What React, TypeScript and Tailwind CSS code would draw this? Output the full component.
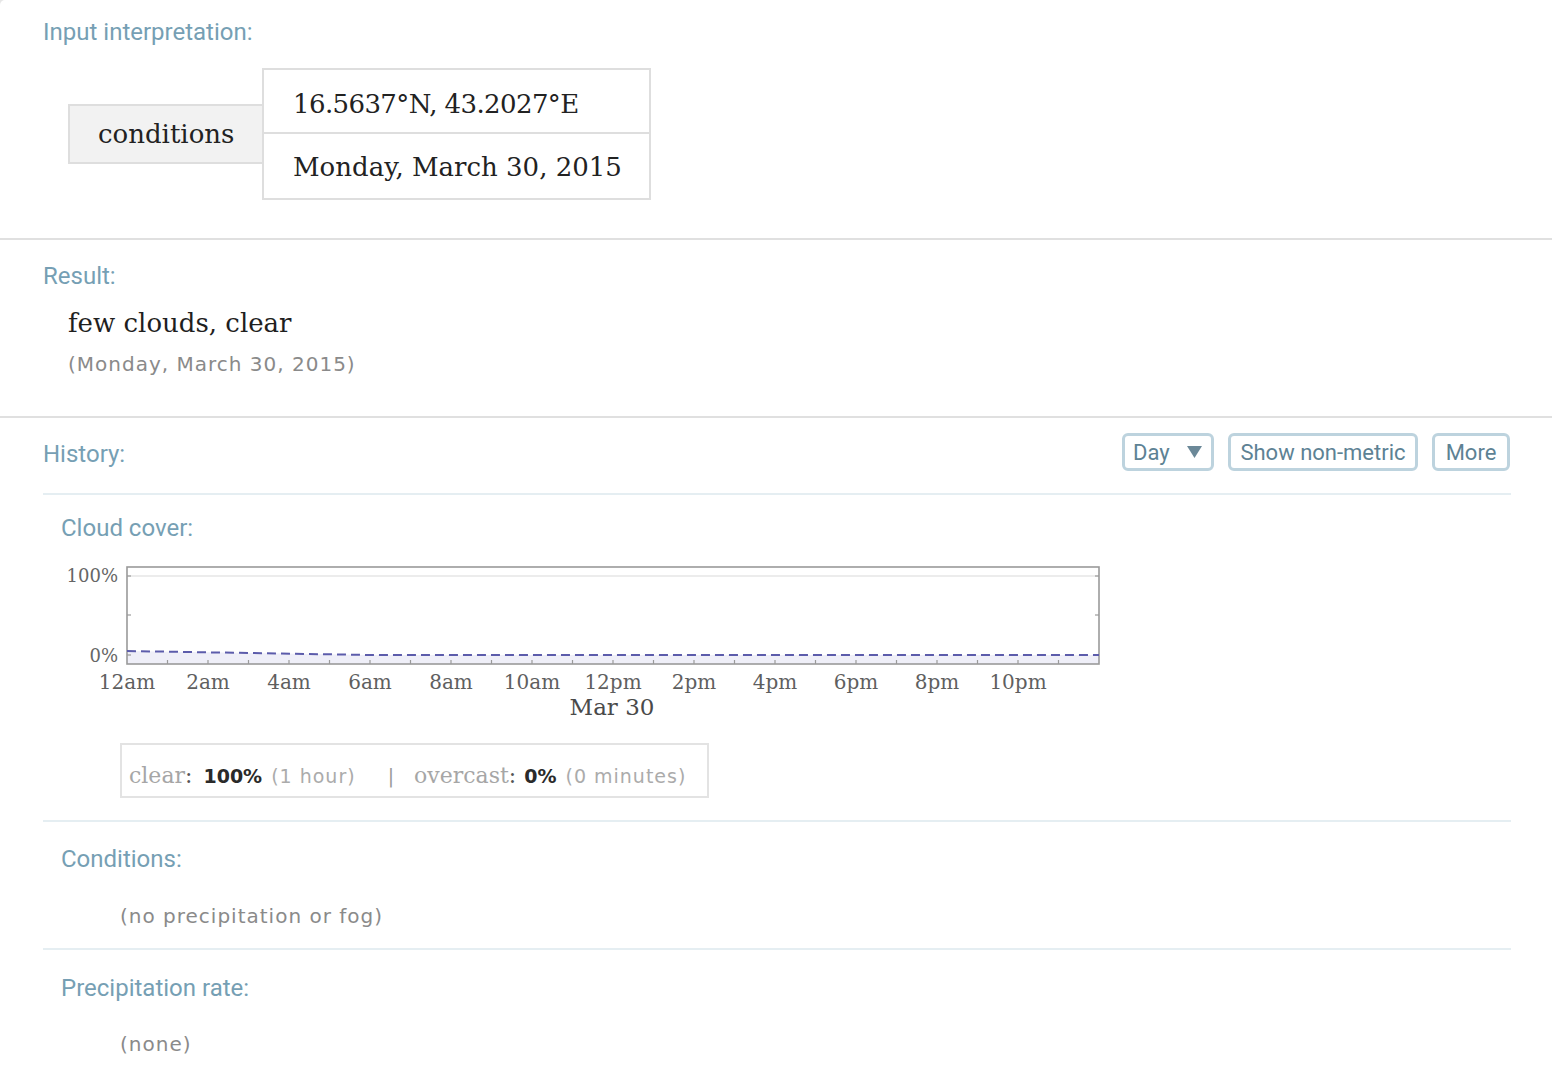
import React from "react";

const H = "font-[family-name:Roboto,sans-serif] text-[24px] leading-[28px] text-[#769fb4]";
const SERIF = "font-[family-name:'DejaVu_Serif',serif]";
const SANS = "font-[family-name:'DejaVu_Sans',sans-serif]";
const GRAYTXT = "font-[family-name:'DejaVu_Sans',sans-serif] text-[20px] leading-[26px] tracking-[1px] text-[#8a8a8a]";
const BTN = "h-[38px] border-[3px] border-[#bdd3de] rounded-[6px] bg-white flex items-center font-[family-name:Roboto,sans-serif] text-[22px] text-[#5d8294]";

function Chart() {
  const x0 = 72;
  const x1 = 1044;
  const hour = (x1 - x0) / 24;
  const labels = ["12am", "2am", "4am", "6am", "8am", "10am", "12pm", "2pm", "4pm", "6pm", "8pm", "10pm"];
  const hourTicks = Array.from({ length: 23 }, (_, i) => x0 + (i + 1) * hour);
  return (
    <svg width="1060" height="165" viewBox="0 0 1060 165">
      <polygon points={`${x0},90 315,94 ${x1},94 ${x1},103 ${x0},103`} fill="#efeff8" />
      <line x1={x0} y1={15} x2={x1} y2={15} stroke="#e6e6e6" strokeWidth="1.5" />
      <rect x={x0} y={6} width={x1 - x0} height={97} fill="none" stroke="#9a9a9a" strokeWidth="1.6" />
      {[15, 54, 94].map((y) => (
        <g key={y}>
          <line x1={x0} y1={y} x2={x0 + 4} y2={y} stroke="#9a9a9a" strokeWidth="1.2" />
          <line x1={x1 - 4} y1={y} x2={x1} y2={y} stroke="#9a9a9a" strokeWidth="1.2" />
        </g>
      ))}
      {hourTicks.map((x) => (
        <line key={x} x1={x} y1={103} x2={x} y2={99} stroke="#9a9a9a" strokeWidth="1.2" />
      ))}
      <polyline
        points={`${x0},90 315,94 ${x1},94`}
        fill="none"
        stroke="#5c5cab"
        strokeWidth="2"
        strokeDasharray="9 5"
      />
      <text x={63} y={20.5} textAnchor="end" fontFamily="DejaVu Serif, serif" fontSize="18" fill="#666">
        100%
      </text>
      <text x={63} y={100.5} textAnchor="end" fontFamily="DejaVu Serif, serif" fontSize="18" fill="#666">
        0%
      </text>
      {labels.map((l, i) => (
        <text
          key={l}
          x={x0 + i * hour * 2}
          y={127.5}
          textAnchor="middle"
          fontFamily="DejaVu Serif, serif"
          fontSize="20"
          fill="#5f5f5f"
        >
          {l}
        </text>
      ))}
      <text x={557} y={154} textAnchor="middle" fontFamily="DejaVu Serif, serif" fontSize="23" fill="#4a4a4a">
        Mar 30
      </text>
    </svg>
  );
}

export default function App() {
  return (
    <div className="w-[1552px] min-h-[1092px] bg-[#e6e6e6]">
      <div className="w-[1552px] min-h-[1092px] bg-white rounded-tl-[5px]">
        {/* Input interpretation */}
        <div className="pt-[18px] pb-[38px] border-b-2 border-[#e0e0e0]">
          <div className={H + " pl-[43px]"}>Input interpretation:</div>
          <div className="mt-[22px] ml-[68px] flex items-center">
            <div
              className={
                SERIF +
                " w-[194px] h-[60px] bg-[#f2f2f2] border-2 border-r-0 border-[#dedede] flex items-center pl-[28px] text-[26px] text-[#222]"
              }
            >
              conditions
            </div>
            <div className={SERIF + " w-[389px] border-2 border-[#dedede] bg-white text-[26px] text-[#222]"}>
              <div className="h-[64px] flex items-center pl-[29px] pt-[6px] border-b-2 border-[#dedede] tracking-[-0.6px]">
                16.5637°N, 43.2027°E
              </div>
              <div className="h-[64px] flex items-center pl-[29px] pt-[2px]">Monday, March 30, 2015</div>
            </div>
          </div>
        </div>

        {/* Result */}
        <div className="pt-[22px] pb-[39px] border-b-2 border-[#e0e0e0]">
          <div className={H + " pl-[43px]"}>Result:</div>
          <div className={SERIF + " mt-[16px] pl-[68px] text-[26px] leading-[34px] text-[#1f1f1f]"}>
            few clouds, clear
          </div>
          <div className={GRAYTXT + " mt-[11px] pl-[68px]"}>(Monday, March 30, 2015)</div>
        </div>

        {/* History */}
        <div className="pl-[43px] pr-[41px]">
          <div className="pt-[15px] flex items-start justify-between">
            <div className={H + " mt-[7px]"}>History:</div>
            <div className="flex items-center gap-[14px] pr-[1px]">
              <div className={BTN + " w-[92px] justify-between pl-[8px] pr-[9px]"}>
                <span>Day</span>
                <svg width="15" height="12" viewBox="0 0 15 12">
                  <polygon points="0,0 15,0 7.5,12" fill="#6b8898" />
                </svg>
              </div>
              <div className={BTN + " w-[190px] justify-center"}>Show non-metric</div>
              <div className={BTN + " w-[78px] justify-center"}>More</div>
            </div>
          </div>

          {/* Cloud cover */}
          <div className="mt-[22px] border-t-2 border-[#e5eef2] pt-[19px] pb-[22px]">
            <div className={H + " pl-[18px]"}>Cloud cover:</div>
            <div className="mt-[19px] ml-[12px]">
              <Chart />
            </div>
            <div className="mt-[17px] ml-[77px] w-[589px] h-[55px] border-2 border-[#e3e3e3] flex items-baseline pl-[7px] pt-[14px]">
              <span className={SERIF + " text-[22px] text-[#a6a6a6]"}>
                clear<span className="text-[#555]">:</span>
              </span>
              <span className={SANS + " ml-[11px] text-[19px] font-bold text-[#2a2a2a]"}>100%</span>
              <span className={SANS + " ml-[9px] text-[19px] tracking-[1px] text-[#ababab]"}>(1 hour)</span>
              <span className={SANS + " ml-[32px] text-[19px] text-[#9a9a9a]"}>|</span>
              <span className={SERIF + " ml-[20px] text-[22px] text-[#a6a6a6]"}>
                overcast<span className="text-[#555]">:</span>
              </span>
              <span className={SANS + " ml-[8px] text-[19px] font-bold text-[#2a2a2a]"}>0%</span>
              <span className={SANS + " ml-[9px] text-[19px] tracking-[1px] text-[#ababab]"}>(0 minutes)</span>
            </div>
          </div>

          {/* Conditions */}
          <div className="border-t-2 border-[#e5eef2] pt-[23px] pb-[19px]">
            <div className={H + " pl-[18px]"}>Conditions:</div>
            <div className={GRAYTXT + " mt-[30px] pl-[77px]"}>(no precipitation or fog)</div>
          </div>

          {/* Precipitation rate */}
          <div className="border-t-2 border-[#e5eef2] pt-[24px] pb-[30px]">
            <div className={H + " pl-[18px]"}>Precipitation rate:</div>
            <div className={GRAYTXT + " mt-[29px] pl-[77px]"}>(none)</div>
          </div>
        </div>
      </div>
    </div>
  );
}
